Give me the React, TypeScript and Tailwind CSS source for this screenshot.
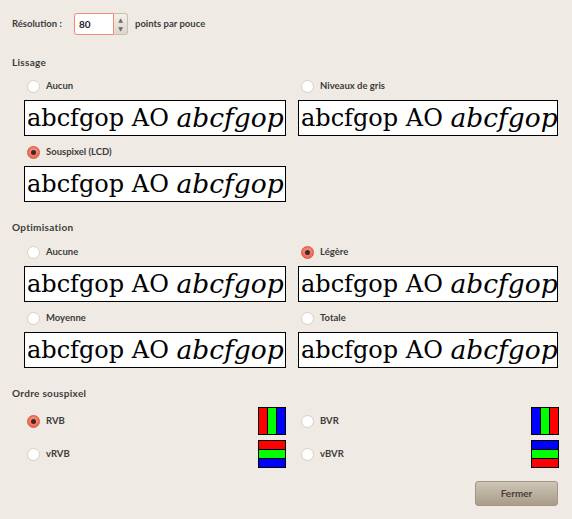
import React from "react";

const ui = { fontFamily: "Lato, 'DejaVu Sans', sans-serif" };
const serif = { fontFamily: "'DejaVu Serif', serif" };

function Radio({ checked, label }: { checked?: boolean; label: string }) {
  return (
    <div className="flex items-center h-[16px]">
      {checked ? (
        <span className="w-[13px] h-[13px] rounded-full border border-[#d9553f] bg-[radial-gradient(circle_at_50%_40%,#fb9b88,#e9553d)] flex items-center justify-center shrink-0">
          <span className="w-[5px] h-[5px] rounded-full bg-[#3a2a2a]" />
        </span>
      ) : (
        <span className="w-[13px] h-[13px] rounded-full border border-[#d8cfc2] bg-white shrink-0" />
      )}
      <span className="ml-[6px] text-[9.5px] font-bold text-[#3c3c3c]" style={ui}>
        {label}
      </span>
    </div>
  );
}

function Preview() {
  return (
    <div className="h-[36px] border border-black bg-white flex items-center pl-[2px] overflow-hidden whitespace-nowrap text-black leading-none" style={serif}>
      <span className="text-[24px]">abcfgop AO&nbsp;</span>
      <span className="italic text-[26.5px]">abcfgop</span>
    </div>
  );
}

function Option({ checked, label }: { checked?: boolean; label: string }) {
  return (
    <div className="flex flex-col">
      <div className="pl-[3px] h-[16px] flex items-center">
        <Radio checked={checked} label={label} />
      </div>
      <div className="mt-[6px]">
        <Preview />
      </div>
    </div>
  );
}

function Header({ children }: { children: React.ReactNode }) {
  return (
    <div className="text-[10px] font-bold text-[#3c3c3c] tracking-[0.3px] h-[14px] flex items-center" style={ui}>
      {children}
    </div>
  );
}

function SwatchV({ colors }: { colors: string[] }) {
  return (
    <div className="w-[28px] h-[28px] border border-black bg-black flex gap-[1px]">
      {colors.map((c, i) => (
        <div key={i} className="flex-1" style={{ background: c }} />
      ))}
    </div>
  );
}

function SwatchH({ colors }: { colors: string[] }) {
  return (
    <div className="w-[28px] h-[28px] border border-black bg-black flex flex-col gap-[1px]">
      {colors.map((c, i) => (
        <div key={i} className="flex-1" style={{ background: c }} />
      ))}
    </div>
  );
}

function OrderRow({ checked, label, swatch }: { checked?: boolean; label: string; swatch: React.ReactNode }) {
  return (
    <div className="flex items-center justify-between h-[28px]">
      <div className="pl-[3px]">
        <Radio checked={checked} label={label} />
      </div>
      {swatch}
    </div>
  );
}

export default function App() {
  return (
    <div className="w-[572px] h-[519px] bg-[#efebe4] relative overflow-hidden" style={ui}>
      <div className="pl-[12px] pr-[14px] pt-[13px]">
        {/* Resolution */}
        <div className="flex items-center h-[22px]">
          <span className="text-[9.5px] font-bold text-[#3c3c3c] w-[62px]">Résolution :</span>
          <div className="flex h-[22px]">
            <div className="w-[40px] h-[22px] border border-[#f08a70] rounded-l-[3px] bg-white flex items-center pl-[4px] text-[10px] font-bold text-[#222]">
              80
            </div>
            <div className="w-[14px] h-[22px] border border-l-0 border-[#c8bfb2] rounded-r-[3px] bg-[linear-gradient(#f3f0ea,#ddd6cb)] flex flex-col items-center justify-center text-[#6a6a6a] text-[6px] leading-[9px]">
              <span>▲</span>
              <span>▼</span>
            </div>
          </div>
          <span className="ml-[7px] text-[9.5px] font-bold text-[#3c3c3c]">points par pouce</span>
        </div>

        {/* Lissage */}
        <div className="mt-[20px]">
          <Header>Lissage</Header>
        </div>
        <div className="pl-[12px] mt-[9px] grid grid-cols-[262px_260px] gap-x-[12px] gap-y-[8px]">
          <Option label="Aucun" />
          <Option label="Niveaux de gris" />
          <Option checked label="Souspixel (LCD)" />
        </div>

        {/* Optimisation */}
        <div className="mt-[18px]">
          <Header>Optimisation</Header>
        </div>
        <div className="pl-[12px] mt-[10px] grid grid-cols-[262px_260px] gap-x-[12px] gap-y-[8px]">
          <Option label="Aucune" />
          <Option checked label="Légère" />
          <Option label="Moyenne" />
          <Option label="Totale" />
        </div>

        {/* Ordre souspixel */}
        <div className="mt-[18px]">
          <Header>Ordre souspixel</Header>
        </div>
        <div className="pl-[12px] mt-[7px] grid grid-cols-[262px_261px] gap-x-[12px] gap-y-[5px]">
          <OrderRow checked label="RVB" swatch={<SwatchV colors={["#ff0000", "#00ff00", "#0000ff"]} />} />
          <OrderRow label="BVR" swatch={<SwatchV colors={["#0000ff", "#00ff00", "#ff0000"]} />} />
          <OrderRow label="vRVB" swatch={<SwatchH colors={["#ff0000", "#00ff00", "#0000ff"]} />} />
          <OrderRow label="vBVR" swatch={<SwatchH colors={["#0000ff", "#00ff00", "#ff0000"]} />} />
        </div>

        <div className="flex justify-end mt-[13px]">
          <button className="w-[83px] h-[25px] rounded-[3px] border border-[#a49684] bg-[linear-gradient(#cfc5b6,#a99b89)] text-[10px] font-bold text-[#4a4038]">
            Fermer
          </button>
        </div>
      </div>
    </div>
  );
}
